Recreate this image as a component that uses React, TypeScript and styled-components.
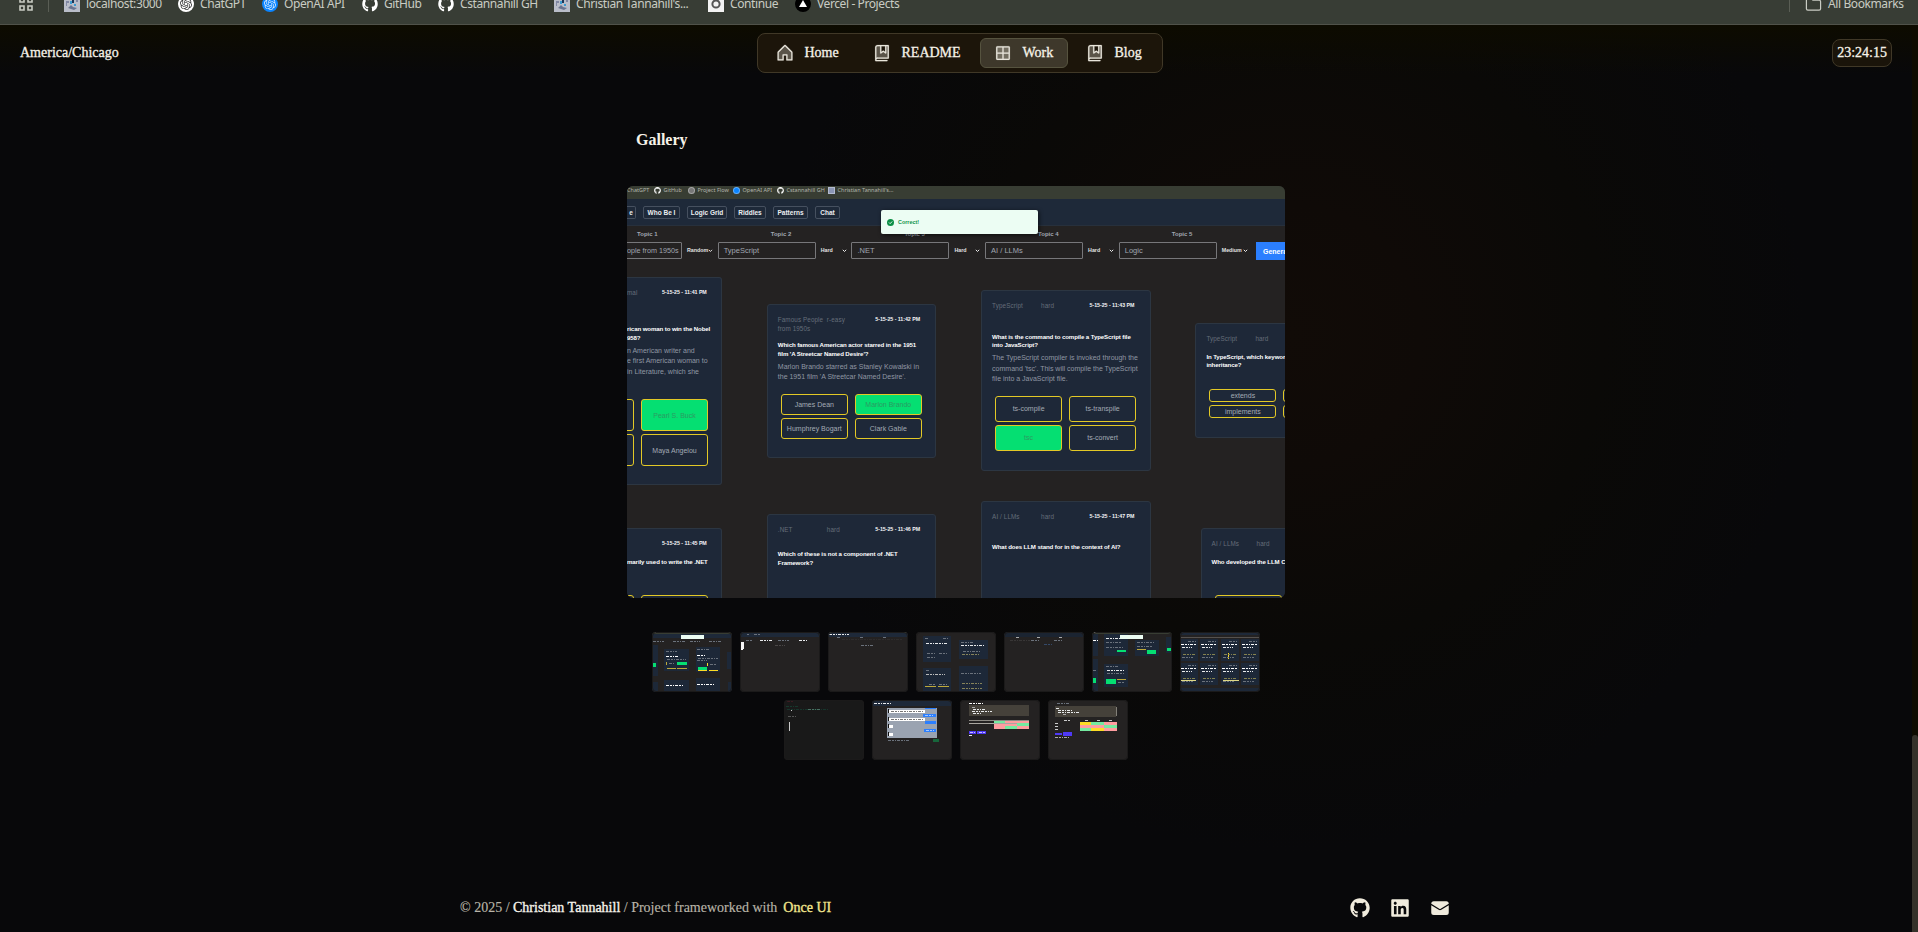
import React from 'react';
import styled, { createGlobalStyle, css } from 'styled-components';
import { PiHouseDuotone, PiBookBookmarkDuotone, PiGridFourDuotone } from 'react-icons/pi';
import { FaGithub, FaLinkedin } from 'react-icons/fa';
import { HiEnvelope } from 'react-icons/hi2';
import { SiOpenai } from 'react-icons/si';
import { Folder } from 'lucide-react';

const GlobalStyle = createGlobalStyle`
  * { box-sizing: border-box; }
  html, body { margin: 0; overflow: hidden; background: #08090a; }
`;

const Page = styled.div`
  position: relative;
  width: 1918px;
  height: 932px;
  overflow: hidden;
  display: flex;
  flex-direction: column;
  color: #f6f2e8;
  font: 14px/20px 'Liberation Serif', 'Times New Roman', serif;
  background: #08090a;
`;

/* Browser bookmarks */
const BookmarkBar = styled.div`
  flex: none;
  height: 25px;
  display: flex;
  justify-content: space-between;
  background: #383d35;
  border-bottom: 1px solid #50524a;
  color: #c9ccc3;
  font: 12px/16px 'Noto Sans', 'Open Sans', sans-serif;
  letter-spacing: -0.4px;
  white-space: nowrap;
`;
const BookmarkGroup = styled.div`
  display: flex;
  align-items: center;
  height: 8px;
  padding-left: 18px;
`;
const AppsIcon = styled.svg`
  width: 16px;
  height: 16px;
  margin-right: 14px;
`;
const Separator = styled.i`
  width: 1px;
  height: 16px;
  background: #5a5e55;
  margin-right: 15px;
`;
const Bookmark = styled.div<{ $w: number }>`
  width: ${(p) => p.$w}px;
  display: flex;
  align-items: center;
  gap: 6px;
`;
const Favicon = styled.svg`
  flex: none;
  width: 16px;
  height: 16px;
`;
const Disc = styled.span<{ $bg: string; $fg: string }>`
  flex: none;
  width: 16px;
  height: 16px;
  border-radius: 50%;
  display: flex;
  align-items: center;
  justify-content: center;
  background: ${(p) => p.$bg};
  color: ${(p) => p.$fg};
`;

/* Site */
const Site = styled.div`
  flex: 1;
  display: flex;
  min-height: 0;
`;
const Content = styled.div`
  width: 1912px;
  display: flex;
  flex-direction: column;
  align-items: center;
  background:
    linear-gradient(#0d0b00, rgba(8, 9, 10, 0) 50px),
    radial-gradient(circle 520px at 1290px 310px, #110b07 0%, #0f0a07 25%, #0a0907 60%, rgba(8, 9, 10, 0) 100%),
    #08080a;
`;
const ScrollTrack = styled.div`
  width: 6px;
  background: #0e0b00;
  padding-top: 710px;
`;
const ScrollThumb = styled.div`
  height: 197px;
  border-radius: 3px 3px 0 0;
  background: #35322a;
`;

const Header = styled.header`
  width: 100%;
  height: 56px;
  padding: 0 20px;
  display: grid;
  grid-template-columns: 1fr auto 1fr;
  align-items: center;
  -webkit-text-stroke: 0.3px currentColor;
`;
const Zone = styled.span``;
const Nav = styled.nav`
  display: flex;
  gap: 4px;
  height: 40px;
  padding: 4px;
  position: relative;
  left: 4px;
  border: 1px solid #403827;
  border-radius: 8px;
  background: #1c150a;
`;
const NavItem = styled.a<{ $w: number; $active?: boolean }>`
  width: ${(p) => p.$w}px;
  display: flex;
  align-items: center;
  gap: 9.5px;
  padding-left: 12px;
  border: 1px solid transparent;
  border-radius: 6px;
  svg { width: 20px; height: 20px; flex: none; color: #e9e6dc; stroke: currentColor; stroke-width: 2; }
  svg path[opacity] { opacity: 0.3; }
  ${(p) => p.$active && css`
    background: #3e382b;
    border-color: #56533f;
  `}
`;
const Clock = styled.span`
  justify-self: end;
  height: 28px;
  padding: 3px 4px;
  border: 1px solid #403827;
  border-radius: 8px;
  background: #1a140a;
`;

const Main = styled.main`
  flex: 1;
  display: flex;
  flex-direction: column;
  align-items: center;
`;
const Title = styled.h1`
  align-self: flex-start;
  margin: 49px 0 36px 9px;
  font-size: 16px;
  line-height: 20px;
`;

const Shot = styled.div`
  position: relative;
  width: 658px;
  height: 412px;
  overflow: hidden;
  border-radius: 6px;
  background: #242222;
  color: #a0a6b1;
  font: 7px/9px 'Liberation Sans', Arial, sans-serif;
  white-space: nowrap;
`;
const ShotMarks = styled.div`
  height: 13px;
  display: flex;
  align-items: flex-start;
  background: #383d33;
  color: #b3b5ab;
  font: 5.5px/8px 'Noto Sans', sans-serif;
`;
const ShotMark = styled.span<{ $w: number }>`
  width: ${(p) => p.$w}px;
  display: flex;
  align-items: center;
  gap: 2.5px;
  svg, i { flex: none; width: 7px; height: 7px; color: #fff; }
`;
const MiniIcon = styled.i<{ $c: string; $square?: boolean }>`
  background: ${(p) => p.$c};
  border-radius: ${(p) => (p.$square ? 0 : '50%')};
  border: 1px solid rgba(255, 255, 255, 0.35);
`;
const ShotNav = styled.div`
  height: 27px;
  display: flex;
  align-items: center;
  gap: 7px;
  background: #1e2939;
  border-bottom: 1px solid #27303c;
`;
const ShotTab = styled.span<{ $w: number; $cut?: boolean }>`
  width: ${(p) => p.$w}px;
  height: 13px;
  display: flex;
  align-items: center;
  justify-content: center;
  border: 1px solid #46505f;
  border-radius: 2px;
  color: #eceef1;
  font-size: 6.5px;
  font-weight: bold;
  ${(p) => p.$cut && css`border-left: 0; border-radius: 0 2px 2px 0;`}
`;
const Topics = styled.div`
  display: flex;
  height: 37px;
  margin-left: -43px;
`;
const Topic = styled.div`
  flex: none;
  width: 133.7px;
`;
const TopicLabel = styled.div`
  padding: 4px 0 3px 53px;
  font-size: 6px;
  font-weight: bold;
`;
const TopicFields = styled.div`
  display: flex;
  align-items: center;
`;
const TopicInput = styled.div<{ $cut?: boolean }>`
  width: 98px;
  height: 17px;
  padding: 3px 0 3px ${(p) => (p.$cut ? 42 : 5)}px;
  border: 1px solid #77777a;
  border-radius: 1px;
  font-size: ${(p) => (p.$cut ? 7.2 : 7.5)}px;
`;
const TopicSelect = styled.div`
  width: 31px;
  display: flex;
  justify-content: space-between;
  align-items: center;
  padding-left: 5px;
  color: #e2e2e2;
  font-size: 5.3px;
  font-weight: bold;
`;
const GenerateButton = styled.div`
  flex: none;
  width: 50px;
  height: 18px;
  margin: 16px 0 0 3.5px;
  padding: 5px 7px;
  background: #2b7fff;
  color: #fff;
  font-weight: bold;
`;
const Toast = styled.div`
  position: absolute;
  left: 254px;
  top: 24px;
  width: 157px;
  height: 24px;
  padding-left: 6px;
  display: flex;
  align-items: center;
  gap: 4px;
  border-radius: 2px;
  background: #ecfdf3;
  box-shadow: 1px 1px 4px #000a;
  color: #10934c;
  font-size: 5.4px;
  font-weight: bold;
`;

const CardRow = styled.div<{ $h: number; $middle?: boolean }>`
  display: flex;
  align-items: ${(p) => (p.$middle ? 'center' : 'flex-start')};
  height: ${(p) => p.$h}px;
`;
const Card = styled.article<{ $h: number; $w?: number; $gap?: number; $drop?: number; $cut?: boolean }>`
  flex: none;
  width: ${(p) => (p.$cut ? 95 : p.$w ?? 169.5)}px;
  height: ${(p) => p.$h}px;
  margin-left: ${(p) => p.$gap ?? 44.8}px;
  margin-top: ${(p) => p.$drop ?? 0}px;
  padding: ${(p) => (p.$cut ? '10px 0 0' : '10px 0 0 10px')};
  border: 1px solid #2c3642;
  border-radius: 3px;
  background: #1e2838;
  ${(p) => p.$cut && css`border-left: 0; border-radius: 0 3px 3px 0; margin-left: 0;`}
`;
const CardHead = styled.div<{ $h: number }>`
  height: ${(p) => p.$h}px;
  display: flex;
  color: #656d79;
  font-size: 6.3px;
  letter-spacing: 0.1px;
`;
const Category = styled.span<{ $w: number }>`
  flex: none;
  width: ${(p) => p.$w}px;
  white-space: pre-line;
`;
const Level = styled.span<{ $w: number }>`
  flex: none;
  width: ${(p) => p.$w}px;
`;
const Stamp = styled.span`
  color: #f2f3f5;
  font-size: 5.3px;
  font-weight: bold;
  line-height: 8px;
  letter-spacing: -0.05px;
`;
const Question = styled.div`
  color: #fff;
  font-size: 6.1px;
  font-weight: bold;
  line-height: 8.8px;
  letter-spacing: -0.1px;
  white-space: pre;
`;
const Answer = styled.div`
  margin-top: 3px;
  color: #9097a3;
  font-size: 7px;
  line-height: 10.5px;
  white-space: pre;
`;
const Options = styled.div<{ $top: number; $rows: number; $left?: number }>`
  display: grid;
  grid-template-columns: 67px 67px;
  grid-auto-rows: ${(p) => p.$rows}px;
  gap: 3px 7px;
  margin: ${(p) => p.$top}px 0 0 ${(p) => p.$left ?? 3}px;
`;
const Option = styled.div<{ $right?: boolean }>`
  display: flex;
  align-items: center;
  justify-content: center;
  border: 1px solid #e3c926;
  border-radius: 3px;
  color: #a3aab5;
  ${(p) => p.$right && css`background: #05df72; color: #2c9a62;`}
`;

const Thumbs = styled.div`
  display: flex;
  flex-wrap: wrap;
  justify-content: center;
  gap: 8px;
  width: 658px;
  margin-top: 34px;
`;
const Thumb = styled.svg`
  width: 80px;
  height: 60px;
  border-radius: 4px;
  background: #242222;
  outline: 1px solid #1b1a1a;
  outline-offset: -1px;
`;

const Footer = styled.footer`
  width: 992px;
  height: 48px;
  display: flex;
  align-items: center;
  justify-content: space-between;
  color: #b9b4a8;
  -webkit-text-stroke: 0.15px currentColor;
`;
const Strong = styled.span`
  color: #f6f3ea;
  -webkit-text-stroke: 0.35px currentColor;
`;
const Brand = styled(Strong)`
  margin-left: 6px;
  color: #f2e58d;
`;
const Social = styled.div`
  display: flex;
  align-items: center;
  gap: 20px;
  padding-right: 2px;
  color: #f0ebdd;
  svg { width: 20px; height: 20px; }
`;

const PhotoIcon = () => (
  <Favicon viewBox="0 0 16 16">
    <rect width="16" height="16" fill="#b9bdc9" />
    <path d="M2 5h3v2H3v3H2zM12 3h2v3h-2z" fill="#8087a3" />
    <path d="M6 5h2v3H6zM10 8h2v2h-2z" fill="#3a9bd0" />
    <path d="M4 12l3-3 2 2 4 1-3 2z" fill="#6a7490" />
    <path d="M8 4h2v3H8z" fill="#1d3557" />
  </Favicon>
);

type Rect = [number, number, number, number, string];
const navy = '#1d2838';
const green = '#05df72';
const gold = '#bda93a';
const white = '#e8eaec';
const gray = '#6b727c';

/* Fourth field holds the colour of a run of tiny text */
type Run = [number, number, number, string];

const Preview = ({ bg, rects, runs }: { bg?: string; rects: Rect[]; runs: Run[] }) => (
  <Thumb viewBox="0 0 80 60">
    {bg && <rect width="80" height="60" fill={bg} />}
    {rects.map(([x, y, w, h, c], i) => (
      <rect key={i} x={x} y={y} width={w} height={h} fill={c} />
    ))}
    {runs.map(([x, y, w, c], i) => (
      <path key={i} d={`M${x} ${y + 0.5}h${w}`} stroke={c} strokeDasharray="3 1 2 1 1 1" />
    ))}
  </Thumb>
);

const gridRects: Rect[] = [];
const gridRuns: Run[] = [];
[7, 31].forEach((y) =>
  [0, 20, 41, 61].forEach((x) => {
    gridRects.push([x, y, 18, 22, navy]);
    gridRuns.push([x + 8, y + 2, 9, gray], [x + 1, y + 5, 15, '#fff'], [x + 2, y + 8, 10, white], [x + 3, y + 15, 12, '#84824f'], [x + 2, y + 18, 11, gray]);
  }),
);

const previews: { bg?: string; rects: Rect[]; runs: Run[] }[] = [
  {
    rects: [
      [0, 0, 80, 2, '#383d33'], [0, 2, 80, 4, '#1e2939'], [29, 3, 23, 4, '#ecfdf3'],
      [0, 13, 6, 31, navy], [12, 17, 25, 22, navy], [44, 15, 24, 25, navy], [75, 20, 5, 17, navy],
      [0, 50, 6, 10, navy], [12, 48, 25, 12, navy], [44, 46, 24, 14, navy], [76, 50, 4, 10, navy],
      [0, 31, 4, 4, green], [25, 30, 10, 3, green], [46, 35, 9, 3, green],
      [15, 36, 9, 1, gold], [25, 36, 10, 1, gold], [46, 38, 9, 1, '#fddc25'], [57, 38, 9, 1, '#fddc25'], [14, 30, 1, 3, gold], [55, 31, 1, 3, '#fddc25'],
    ],
    runs: [
      [3, 0, 27, '#aaa'], [1, 9, 11, gray], [21, 9, 12, gray], [38, 9, 10, gray], [57, 9, 13, gray],
      [14, 19, 11, gray], [14, 24, 13, '#fff'], [15, 27, 19, gray], [17, 31, 5, gray], [45, 17, 12, gray], [45, 23, 9, '#fff'], [46, 26, 20, gray], [45, 28, 10, gray], [58, 32, 6, gray], [14, 53, 18, '#fff'], [45, 52, 17, '#fff'],
    ],
  },
  { rects: [[0, 0, 80, 5, '#1e2939'], [1, 10, 3, 7, '#f5f5f5'], [1, 17, 2, 1, '#fff']], runs: [[7, 2, 2, gray], [14, 2, 6, gray], [6, 8, 7, gray], [20, 8, 12, white], [38, 8, 11, gray], [59, 8, 9, white], [35, 13, 10, '#4a4747']] },
  { rects: [[0, 0, 80, 1, '#4a4e46'], [0, 1, 80, 4, '#1e2939']], runs: [[1, 2, 20, white], [9, 5, 3, gray], [32, 5, 3, gray], [55, 5, 3, gray], [14, 7, 60, '#2e2c2c'], [33, 13, 13, gray]] },
  {
    rects: [[7, 4, 28, 26, navy], [7, 36, 28, 23, navy], [43, 8, 29, 19, navy], [43, 34, 29, 26, navy], [9, 54, 11, 1, gold], [22, 54, 11, 1, gold]],
    runs: [[9, 6, 4, gray], [27, 6, 5, gray], [10, 11, 21, white], [11, 21, 8, gray], [23, 21, 8, gray], [11, 25, 8, gray], [10, 38, 4, gray], [10, 42, 19, '#bbb'], [13, 52, 6, gray], [23, 52, 8, gray], [45, 10, 12, gray], [45, 13, 23, white], [47, 19, 18, gray], [46, 22, 18, '#86835a'], [45, 41, 20, gray], [46, 51, 20, '#86835a'], [46, 56, 20, '#86835a']],
  },
  { rects: [[0, 0, 80, 5, '#1b2431']], runs: [[12, 5, 3, '#aaa'], [33, 5, 3, '#aaa'], [55, 5, 3, '#aaa'], [6, 8, 20, '#383636'], [27, 8, 8, gray], [50, 8, 9, gray], [40, 12, 8, '#344969']] },
  {
    rects: [
      [0, 0, 80, 2, '#383d33'], [0, 2, 6, 22, navy], [12, 2, 24, 22, navy], [43, 8, 24, 16, navy], [74, 5, 6, 16, navy], [28, 3, 23, 4, '#ecfdf3'],
      [0, 27, 6, 33, navy], [12, 32, 24, 23, navy], [0, 46, 4, 5, green], [14, 47, 10, 5, green], [25, 47, 9, 1, gold], [25, 18, 9, 2, green], [55, 18, 9, 4, green], [45, 17, 9, 1, gold], [75, 16, 5, 3, green],
    ],
    runs: [[2, 0, 26, '#aaa'], [14, 6, 14, white], [14, 10, 15, gray], [14, 15, 18, gray], [45, 10, 18, gray], [45, 14, 15, gray], [14, 34, 12, gray], [15, 38, 17, white], [15, 41, 18, gray], [26, 50, 7, gray], [1, 8, 5, '#fff'], [1, 38, 4, gray]],
  },
  { rects: [[0, 0, 80, 3, '#1e2939'], [0, 5, 80, 1, '#55514e'], ...gridRects, [0, 48, 16, 1, '#dfd985'], [43, 48, 16, 1, '#dfd985'], [48, 21, 1, 6, '#fddc25'], [0, 56, 80, 3, navy]], runs: gridRuns },
  { bg: '#191919', rects: [[5, 22, 1, 9, '#c9c9c9'], [7, 10, 1, 1, '#ccc']], runs: [[3, 1, 6, '#3b1c22'], [2, 6, 12, '#16382c'], [3, 9, 41, '#16352c'], [24, 9, 13, '#496f61'], [4, 16, 8, '#555']] },
  {
    rects: [
      [0, 1, 80, 5, '#1e2939'], [15, 8, 50, 30, '#9aa3b1'], [53, 8, 11, 1, '#2b7fff'], [17, 10, 36, 3, '#fff'], [51, 14, 13, 3, '#2b7fff'], [17, 18, 36, 3, '#fff'], [53, 21, 11, 3, '#2b7fff'],
      [17, 25, 4, 3, '#fff'], [52, 29, 12, 3, '#2b7fff'], [17, 33, 4, 3, '#fff'], [16, 9, 1, 4, '#111'], [16, 17, 1, 4, '#111'], [16, 24, 1, 4, '#111'], [16, 32, 1, 4, '#111'], [61, 39, 6, 3, '#17663b'],
    ],
    runs: [[2, 3, 18, white], [19, 11, 32, '#777'], [19, 19, 32, '#777'], [53, 15, 9, '#a5c8ff'], [54, 30, 8, '#a5c8ff'], [16, 40, 22, gray]],
  },
  {
    rects: [[9, 5, 60, 11, '#45413a'], [9, 20, 60, 1, '#8e8b85'], [9, 23, 60, 1, '#aaa7a1'], [34, 21, 11, 2, '#75eaa0'], [45, 21, 24, 2, '#ff9da0'], [34, 24, 11, 5, '#ff9da0'], [45, 24, 12, 2, '#ff9da0'], [57, 23, 12, 3, '#75eaa0'], [45, 26, 12, 3, '#75eaa0'], [57, 26, 12, 3, '#ff9da0'], [9, 31, 7, 3, '#4f39f6'], [17, 31, 9, 3, '#4f39f6']],
    runs: [[9, 3, 14, '#fff'], [12, 7, 3, '#aaa'], [13, 9, 12, white], [12, 11, 20, white], [13, 13, 9, white], [10, 32, 5, '#c5bdff'], [19, 32, 6, '#c5bdff'], [9, 35, 3, white]],
  },
  {
    rects: [[7, 6, 61, 11, '#45413a'], [68, 7, 1, 9, '#827f78'], [32, 22, 11, 3, '#fddc25'], [43, 22, 13, 3, '#75eaa0'], [56, 22, 13, 3, '#ff9da0'], [32, 25, 24, 3, '#ff9da0'], [56, 25, 13, 3, '#75eaa0'], [32, 28, 11, 3, '#75eaa0'], [43, 28, 13, 3, '#fddc25'], [56, 28, 13, 3, '#ff9da0'], [7, 33, 7, 2, '#4f39f6'], [15, 32, 9, 4, '#4f39f6']],
    runs: [[9, 3, 12, gray], [8, 8, 4, white], [10, 10, 14, white], [10, 12, 21, white], [15, 14, 3, '#aaa'], [16, 20, 7, '#ccc'], [37, 20, 3, '#ccc'], [49, 20, 3, '#ccc'], [61, 20, 3, '#ccc'], [7, 23, 3, '#ccc'], [7, 26, 3, '#ccc'], [7, 29, 3, '#ccc'], [7, 37, 14, '#aaa']],
  },
];

const Select = ({ label }: { label: string }) => (
  <TopicSelect>
    {label}
    <svg width="5" height="4" viewBox="0 0 5 4" fill="none" stroke="#eee"><path d="M.8.8l1.7 1.7L4.2.8" /></svg>
  </TopicSelect>
);

const Head = ({ h, category, level, stamp, catWidth = 49, levelWidth = 48.5 }: { h: number; category: string; level: string; stamp?: string; catWidth?: number; levelWidth?: number }) => (
  <CardHead $h={h}>
    <Category $w={catWidth}>{category}</Category>
    <Level $w={levelWidth}>{level}</Level>
    <Stamp>{stamp}</Stamp>
  </CardHead>
);

export default function App() {
  const topics = [
    ['Topic 1', 'ople from 1950s', 'Random'],
    ['Topic 2', 'TypeScript', 'Hard'],
    ['Topic 3', '.NET', 'Hard'],
    ['Topic 4', 'AI / LLMs', 'Hard'],
    ['Topic 5', 'Logic', 'Medium'],
  ];
  return (
    <Page>
      <GlobalStyle />
      <BookmarkBar>
        <BookmarkGroup>
          <AppsIcon viewBox="0 0 16 16" fill="none" stroke="#c9ccc3" strokeWidth="1.6">
            <path d="M2 2h4v4H2zM10 2h4v4h-4zM2 10h4v4H2zM10 10h4v4h-4z" />
          </AppsIcon>
          <Separator />
          <Bookmark $w={114}><PhotoIcon /><span>localhost:3000</span></Bookmark>
          <Bookmark $w={84}><Disc $bg="#fff" $fg="#333"><SiOpenai size={12} /></Disc><span>ChatGPT</span></Bookmark>
          <Bookmark $w={100}><Disc $bg="#0a84ff" $fg="#d8ebff"><SiOpenai size={12} /></Disc><span>OpenAI API</span></Bookmark>
          <Bookmark $w={76}><FaGithub size={16} color="#fff" /><span>GitHub</span></Bookmark>
          <Bookmark $w={116}><FaGithub size={16} color="#fff" /><span>Cstannahill GH</span></Bookmark>
          <Bookmark $w={154}><PhotoIcon /><span>Christian Tannahill's...</span></Bookmark>
          <Bookmark $w={87}>
            <Favicon viewBox="0 0 16 16"><rect width="16" height="16" fill="#f3f3f3" /><circle cx="8" cy="8" r="3.6" fill="none" stroke="#555" strokeWidth="2" /></Favicon>
            <span>Continue</span>
          </Bookmark>
          <Bookmark $w={120}>
            <Favicon viewBox="0 0 16 16"><circle cx="8" cy="8" r="8" fill="#000" /><path d="M8 4l4 7H4z" fill="#fff" /></Favicon>
            <span>Vercel - Projects</span>
          </Bookmark>
        </BookmarkGroup>
        <BookmarkGroup>
          <Separator />
          <Bookmark $w={113}><Folder size={17} strokeWidth={1.7} /><span>All Bookmarks</span></Bookmark>
        </BookmarkGroup>
      </BookmarkBar>

      <Site>
        <Content>
          <Header>
            <Zone>America/Chicago</Zone>
            <Nav>
              <NavItem $w={93}><PiHouseDuotone />Home</NavItem>
              <NavItem $w={117}><PiBookBookmarkDuotone />README</NavItem>
              <NavItem $w={88} $active><PiGridFourDuotone />Work</NavItem>
              <NavItem $w={86}><PiBookBookmarkDuotone />Blog</NavItem>
            </Nav>
            <Clock>23:24:15</Clock>
          </Header>

          <Main>
            <Title>Gallery</Title>
            <Shot>
              <ShotMarks>
                <ShotMark $w={27}>ChatGPT</ShotMark>
                <ShotMark $w={34}><FaGithub />GitHub</ShotMark>
                <ShotMark $w={45}><MiniIcon $c="#777" />Project Flow</ShotMark>
                <ShotMark $w={44}><MiniIcon $c="#0a84ff" />OpenAI API</ShotMark>
                <ShotMark $w={51}><FaGithub />Cstannahill GH</ShotMark>
                <ShotMark $w={70}><MiniIcon $c="#8b96b4" $square />Christian Tannahill's...</ShotMark>
              </ShotMarks>
              <ShotNav>
                <ShotTab $w={9} $cut>e</ShotTab>
                <ShotTab $w={37}>Who Be I</ShotTab>
                <ShotTab $w={40}>Logic Grid</ShotTab>
                <ShotTab $w={32}>Riddles</ShotTab>
                <ShotTab $w={35}>Patterns</ShotTab>
                <ShotTab $w={25}>Chat</ShotTab>
              </ShotNav>
              <Topics>
                {topics.map(([name, value, level], i) => (
                  <Topic key={name}>
                    <TopicLabel>{name}</TopicLabel>
                    <TopicFields>
                      <TopicInput $cut={i === 0}>{value}</TopicInput>
                      <Select label={level} />
                    </TopicFields>
                  </Topic>
                ))}
                <GenerateButton>Generate</GenerateButton>
              </Topics>

              <CardRow $h={235} $middle>
                <Card $h={208} $cut>
                  <Head h={37.5} category="mal" level="" stamp="5-15-25 - 11:41 PM" catWidth={12} levelWidth={23} />
                  <Question>{"rican woman to win the Nobel\n958?"}</Question>
                  <Answer>{'n American writer and\ne first American woman to\nin Literature, which she'}</Answer>
                  <Options $top={22} $rows={32} $left={-60}>
                    <Option /><Option $right>Pearl S. Buck</Option>
                    <Option /><Option>Maya Angelou</Option>
                  </Options>
                </Card>
                <Card $h={154}>
                  <Head h={26.5} category={'Famous People\nfrom 1950s'} level="r-easy" stamp="5-15-25 - 11:42 PM" />
                  <Question>{"Which famous American actor starred in the 1951\nfilm 'A Streetcar Named Desire'?"}</Question>
                  <Answer>{"Marlon Brando starred as Stanley Kowalski in\nthe 1951 film 'A Streetcar Named Desire'."}</Answer>
                  <Options $top={11} $rows={21}>
                    <Option>James Dean</Option><Option $right>Marlon Brando</Option>
                    <Option>Humphrey Bogart</Option><Option>Clark Gable</Option>
                  </Options>
                </Card>
                <Card $h={181}>
                  <Head h={31.5} category="TypeScript" level="hard" stamp="5-15-25 - 11:43 PM" />
                  <Question>{'What is the command to compile a TypeScript file\ninto JavaScript?'}</Question>
                  <Answer>{"The TypeScript compiler is invoked through the\ncommand 'tsc'. This will compile the TypeScript\nfile into a JavaScript file."}</Answer>
                  <Options $top={11} $rows={26}>
                    <Option>ts-compile</Option><Option>ts-transpile</Option>
                    <Option $right>tsc</Option><Option>ts-convert</Option>
                  </Options>
                </Card>
                <Card $h={115}>
                  <Head h={18.5} category="TypeScript" level="hard" />
                  <Question>{'In TypeScript, which keyword is used for\ninheritance?'}</Question>
                  <Options $top={19} $rows={13}>
                    <Option>extends</Option><Option />
                    <Option>implements</Option><Option />
                  </Options>
                </Card>
              </CardRow>

              <CardRow $h={120}>
                <Card $h={120} $cut $drop={30}>
                  <Head h={19} category="" level="" stamp="5-15-25 - 11:45 PM" catWidth={12} levelWidth={23} />
                  <Question>marily used to write the .NET</Question>
                  <Options $top={28} $rows={20} $left={-60}><Option /><Option /></Options>
                </Card>
                <Card $h={120} $drop={16}>
                  <Head h={25} category=".NET" level="hard" stamp="5-15-25 - 11:46 PM" />
                  <Question>{'Which of these is not a component of .NET\nFramework?'}</Question>
                  <Options $top={30} $rows={20}><Option /><Option /></Options>
                </Card>
                <Card $h={120} $drop={3}>
                  <Head h={30.5} category="AI / LLMs" level="hard" stamp="5-15-25 - 11:47 PM" />
                  <Question>What does LLM stand for in the context of AI?</Question>
                </Card>
                <Card $h={120} $drop={30} $gap={50}>
                  <Head h={19} category="AI / LLMs" level="hard" catWidth={45} />
                  <Question>Who developed the LLM ChatGPT?</Question>
                  <Options $top={28} $rows={20}><Option /></Options>
                </Card>
              </CardRow>

              <Toast>
                <svg width="7" height="7" viewBox="0 0 14 14"><circle cx="7" cy="7" r="7" fill="#0b8f45" /><path d="M4 7l2.3 2.3L10.3 5" stroke="#fff" strokeWidth="1.8" fill="none" /></svg>
                Correct!
              </Toast>
            </Shot>
            <Thumbs>
              {previews.map((p, i) => <Preview key={i} {...p} />)}
            </Thumbs>
          </Main>

          <Footer>
            <div>© 2025 / <Strong>Christian Tannahill</Strong> / Project frameworked with<Brand>Once UI</Brand></div>
            <Social><FaGithub /><FaLinkedin /><HiEnvelope /></Social>
          </Footer>
        </Content>
        <ScrollTrack><ScrollThumb /></ScrollTrack>
      </Site>
    </Page>
  );
}
